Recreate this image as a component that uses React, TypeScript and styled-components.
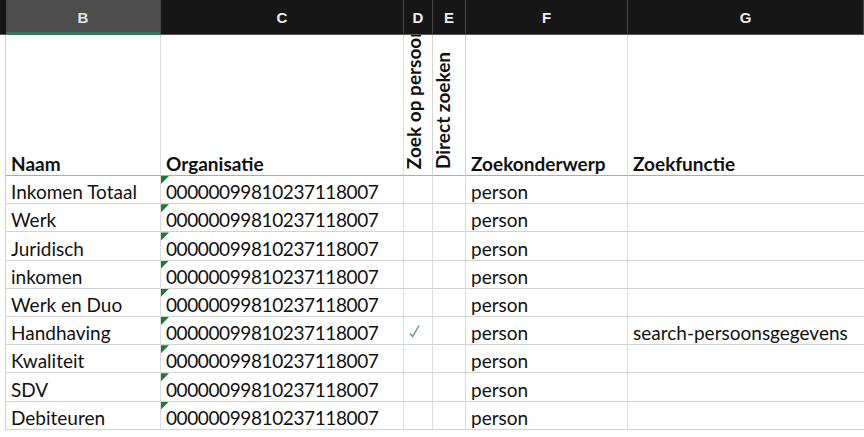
import React from "react";
import styled, { createGlobalStyle } from "styled-components";

const GlobalStyle = createGlobalStyle`
  html, body {
    margin: 0;
    padding: 0;
    background: #fff;
  }
  body {
    font-family: Lato, "Liberation Sans", sans-serif;
    color: #111;
  }
`;

const rows = [
  { name: "Inkomen Totaal", check: false, fn: "" },
  { name: "Werk", check: false, fn: "" },
  { name: "Juridisch", check: false, fn: "" },
  { name: "inkomen", check: false, fn: "" },
  { name: "Werk en Duo", check: false, fn: "" },
  { name: "Handhaving", check: true, fn: "search-persoonsgegevens" },
  { name: "Kwaliteit", check: false, fn: "" },
  { name: "SDV", check: false, fn: "" },
  { name: "Debiteuren", check: false, fn: "" },
];

const letters = ["B", "C", "D", "E", "F", "G"];

export default function App() {
  return (
    <>
      <GlobalStyle />
      <Sheet>
        <Corner />
        {letters.map((l) => (
          <ColHead key={l} $selected={l === "B"}>
            {l}
          </ColHead>
        ))}

        <RowStub />
        <TitleCell>Naam</TitleCell>
        <TitleCell>Organisatie</TitleCell>
        <VerticalCell $clip>
          <VerticalLabel>Zoek op persoon</VerticalLabel>
        </VerticalCell>
        <VerticalCell>
          <VerticalLabel>Direct zoeken</VerticalLabel>
        </VerticalCell>
        <TitleCell>Zoekonderwerp</TitleCell>
        <TitleCell $last>Zoekfunctie</TitleCell>

        {rows.map((r) => (
          <React.Fragment key={r.name}>
            <RowStub />
            <Cell>{r.name}</Cell>
            <NumberCell>00000099810237118007</NumberCell>
            <CheckCell>
              {r.check && (
                <svg width="11" height="14" viewBox="0 0 11 14">
                  <path d="M1 9.5 L3.6 12.6 L10 1.5" fill="none" stroke="#4e9a78" strokeWidth="1.3" />
                </svg>
              )}
            </CheckCell>
            <CheckCell />
            <Cell>person</Cell>
            <Cell $last>{r.fn}</Cell>
          </React.Fragment>
        ))}
      </Sheet>
    </>
  );
}

const Sheet = styled.div`
  display: grid;
  grid-template-columns: 6px 155px 243px 29px 33px 162px 1fr;
  grid-template-rows: 35px 141px repeat(9, 28.2px);
  width: 864px;
  height: 437px;
  overflow: hidden;
`;

const Corner = styled.div`
  background: #141414;
  border-bottom: 1px solid #555;
`;

const ColHead = styled.div<{ $selected?: boolean }>`
  display: flex;
  align-items: center;
  justify-content: center;
  background: ${(p) => (p.$selected ? "#4d4d4d" : "#161616")};
  color: ${(p) => (p.$selected ? "#e4e4e4" : "#ececec")};
  font-family: "Liberation Sans", Arial, sans-serif;
  font-weight: 700;
  font-size: 15px;
  border-right: 1px solid #444;
  border-bottom: ${(p) => (p.$selected ? "3px solid #3b7558" : "1px solid #555")};
  padding-top: ${(p) => (p.$selected ? "2px" : "0")};
  box-sizing: border-box;
`;

const RowStub = styled.div`
  background: #fff;
  border-right: 1px solid #cfcfcf;
`;

const baseCell = `
  display: flex;
  align-items: flex-end;
  box-sizing: border-box;
  padding: 0 6px 0 5px;
  font-size: 19px;
  line-height: 23px;
  white-space: nowrap;
  overflow: hidden;
  color: #111;
`;

const TitleCell = styled.div<{ $last?: boolean }>`
  ${baseCell}
  font-weight: 700;
  border-right: ${(p) => (p.$last ? "none" : "1px solid #dcdcdc")};
  border-bottom: 1px solid #ababab;
`;

const VerticalCell = styled.div<{ $clip?: boolean }>`
  display: flex;
  align-items: flex-end;
  box-sizing: border-box;
  overflow: ${(p) => (p.$clip ? "hidden" : "visible")};
  padding-bottom: 6px;
  border-right: 1px solid #d4d4d4;
  border-bottom: 1px solid #ababab;
`;

const VerticalLabel = styled.span`
  writing-mode: vertical-rl;
  transform: rotate(180deg);
  font-size: 19px;
  font-weight: 700;
  line-height: 19px;
  white-space: nowrap;
  color: #111;
`;

const Cell = styled.div<{ $last?: boolean }>`
  ${baseCell}
  border-right: ${(p) => (p.$last ? "none" : "1px solid #dcdcdc")};
  border-bottom: 1px solid #d2d2d2;
`;

const NumberCell = styled.div`
  ${baseCell}
  position: relative;
  letter-spacing: -0.4px;
  border-right: 1px solid #dcdcdc;
  border-bottom: 1px solid #d2d2d2;

  &::before {
    content: "";
    position: absolute;
    left: 0;
    top: 0;
    width: 8px;
    height: 8px;
    background: #1b7a33;
    clip-path: polygon(0 0, 100% 0, 0 100%);
  }
`;

const CheckCell = styled.div`
  display: flex;
  align-items: center;
  padding-left: 5px;
  box-sizing: border-box;
  border-right: 1px solid #dcdcdc;
  border-bottom: 1px solid #d2d2d2;
`;
